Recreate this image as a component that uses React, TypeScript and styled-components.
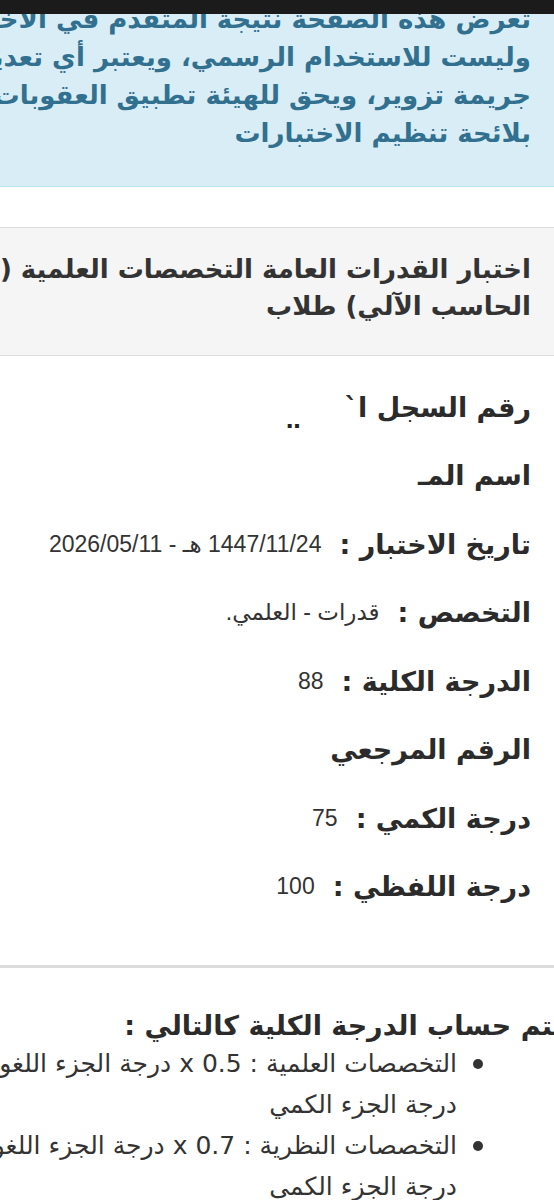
import React from "react";
import styled, { createGlobalStyle } from "styled-components";

const GlobalStyle = createGlobalStyle`
  html, body {
    margin: 0;
    padding: 0;
    background: #ffffff;
    overflow-x: hidden;
  }
  * { box-sizing: border-box; }
`;

const Page = styled.div`
  position: relative;
  direction: rtl;
  width: 100%;
  overflow: hidden;
  font-family: "DejaVu Sans", "Noto Sans", sans-serif;
  color: #333333;
`;

const TopBar = styled.div`
  position: absolute;
  top: 0;
  left: 0;
  right: 0;
  height: 14px;
  background: #1b1b1b;
  z-index: 2;
`;

const Alert = styled.div`
  background: #d9edf7;
  border-bottom: 1px solid #bce8f1;
  color: #31708f;
  font-weight: 700;
  font-size: 26px;
  line-height: 38px;
  padding: 0 23px 34px 0;
  white-space: nowrap;
`;

const PanelHeading = styled.div`
  margin-top: 40px;
  background: #f5f5f5;
  border-top: 1px solid #dddddd;
  border-bottom: 1px solid #dddddd;
  color: #333333;
  font-weight: 700;
  font-size: 26px;
  line-height: 37px;
  padding: 23px 23px 30px 0;
  white-space: nowrap;
`;

const PanelBody = styled.div`
  padding: 17px 23px 44px 0;
  border-bottom: 3px solid #dcdcdc;
`;

const Row = styled.div`
  display: flex;
  align-items: center;
  gap: 18px;
  height: 68.5px;
  white-space: nowrap;
`;

const Label = styled.span`
  font-weight: 700;
  font-size: 27px;
  color: #2b2b2b;
`;

const Value = styled.span`
  font-family: "Liberation Sans", "DejaVu Sans", sans-serif;
  font-size: 23px;
  color: #333333;
`;

const Dots = styled.span`
  font-size: 22px;
  font-weight: 700;
  color: #222;
  margin-right: 26px;
  align-self: flex-end;
  padding-bottom: 9px;
`;

const Notes = styled.div`
  margin-right: -9px;
  padding-top: 40px;
  white-space: nowrap;
`;

const NotesTitle = styled.div`
  font-weight: 700;
  font-size: 27px;
  line-height: 35px;
  color: #2b2b2b;
`;

const List = styled.ul`
  list-style: none;
  margin: 0;
  padding: 0 80px 0 0;
`;

const Item = styled.li`
  display: flex;
  align-items: flex-start;
  gap: 16px;
  font-size: 25px;
  line-height: 41px;
  color: #333333;
`;

const Bullet = styled.span`
  flex: none;
  width: 10px;
  height: 10px;
  border-radius: 50%;
  background: #333333;
  margin-top: 16px;
`;

const rows: { label: string; value?: string }[] = [
  { label: "اسم المـ" },
  { label: "تاريخ الاختبار :", value: "1447/11/24 هـ - 2026/05/11" },
  { label: "التخصص :", value: "قدرات - العلمي." },
  { label: "الدرجة الكلية :", value: "88" },
  { label: "الرقم المرجعي" },
  { label: "درجة الكمي :", value: "75" },
  { label: "درجة اللفظي :", value: "100" },
];

export default function App() {
  return (
    <>
      <GlobalStyle />
      <Page>
        <TopBar />
        <Alert>
          تعرض هذه الصفحة نتيجة المتقدم في الاختبار للاطلاع فقط
          <br />
          وليست للاستخدام الرسمي، ويعتبر أي تعديل عليها
          <br />
          جريمة تزوير، ويحق للهيئة تطبيق العقوبات الواردة
          <br />
          بلائحة تنظيم الاختبارات
        </Alert>
        <PanelHeading>
          اختبار القدرات العامة التخصصات العلمية (المحوسب على
          <br />
          الحاسب الآلي) طلاب
        </PanelHeading>
        <PanelBody>
          <Row>
            <Label>رقم السجل ا`</Label>
            <Dots>‥</Dots>
          </Row>
          {rows.map((r) => (
            <Row key={r.label}>
              <Label>{r.label}</Label>
              {r.value && <Value>{r.value}</Value>}
            </Row>
          ))}
        </PanelBody>
        <Notes>
          <NotesTitle>يتم حساب الدرجة الكلية كالتالي :</NotesTitle>
          <List>
            <Item>
              <Bullet />
              <span>
                التخصصات العلمية : 0.5 x درجة الجزء اللغوي + 0.5 x
                <br />
                درجة الجزء الكمي
              </span>
            </Item>
            <Item>
              <Bullet />
              <span>
                التخصصات النظرية : 0.7 x درجة الجزء اللغوي + 0.3 x
                <br />
                درجة الجزء الكمى
              </span>
            </Item>
          </List>
        </Notes>
      </Page>
    </>
  );
}
